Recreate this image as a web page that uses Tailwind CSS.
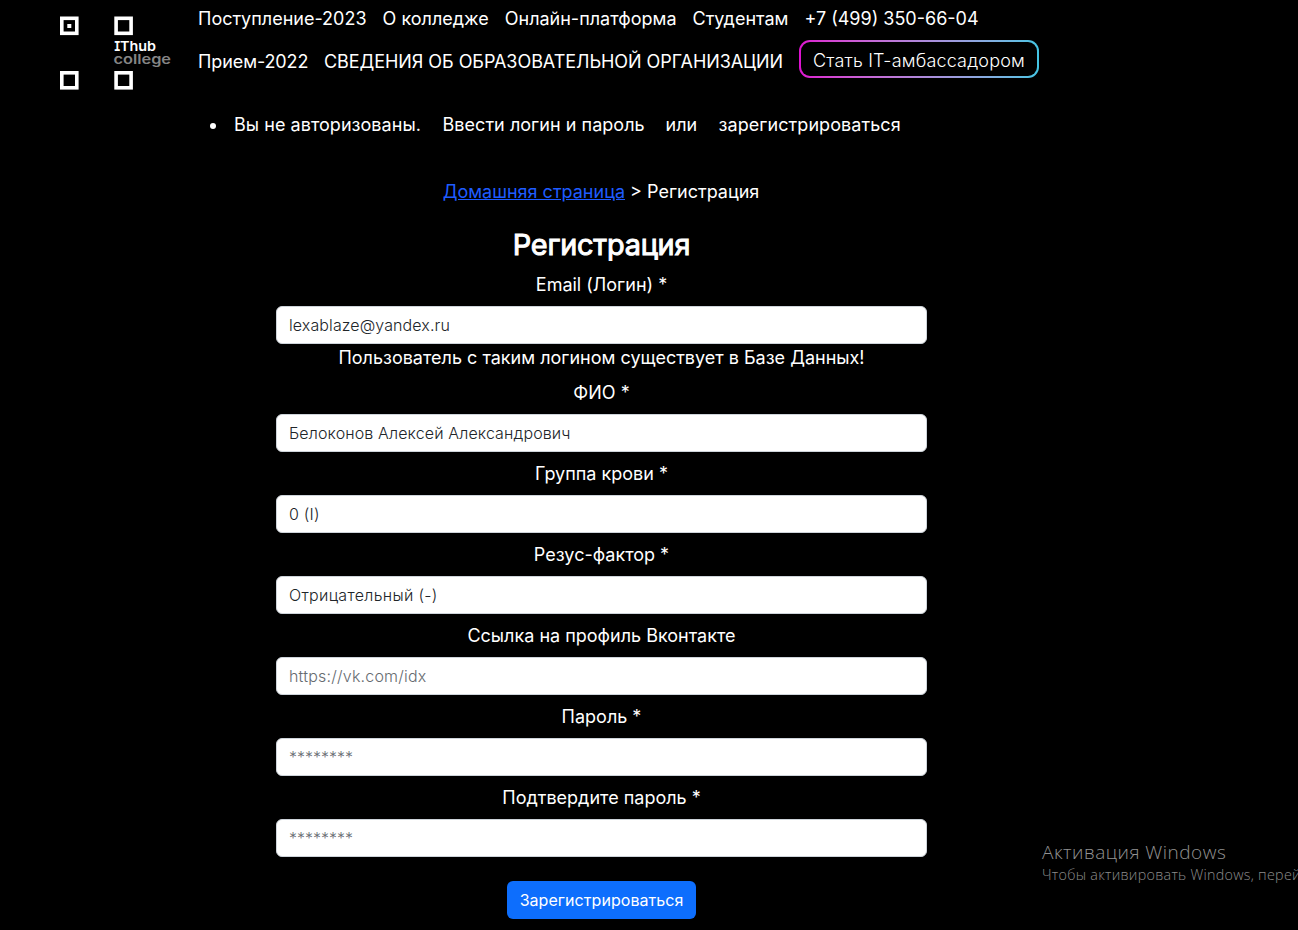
<!DOCTYPE html>
<html lang="ru">
<head>
<meta charset="utf-8">
<title>Регистрация</title>
<script src="https://cdn.jsdelivr.net/npm/@tailwindcss/browser@4"></script>
</head>
<body class="relative h-[930px] w-[1298px] overflow-hidden bg-black font-['Inter',sans-serif] text-[18px] leading-[27px] text-white">
<header class="flex h-[97px] pl-[60px]">
  <svg class="mt-4 h-[76px] w-[138px] shrink-0" viewBox="0 0 138 76">
    <g fill="none" stroke="#fff" stroke-width="3.6">
      <rect x="1.8" y="2.3" width="15" height="15"/><rect x="56.1" y="2.3" width="15" height="15"/>
      <rect x="1.8" y="56.8" width="15" height="15"/><rect x="56.1" y="56.8" width="15" height="15"/>
    </g>
    <rect x="7.3" y="8" width="4" height="4" fill="#fff"/>
    <text x="53.8" y="35.3" fill="#fff" font-family="DejaVu Sans Mono, monospace" font-weight="700" font-size="13.5" textLength="7" lengthAdjust="spacingAndGlyphs">I</text>
    <text x="60" y="35.3" fill="#fff" font-family="Inter, sans-serif" font-weight="600" font-size="13.4" textLength="36" lengthAdjust="spacingAndGlyphs">Thub</text>
    <text x="53.5" y="48" fill="#858585" font-family="Inter, sans-serif" font-weight="600" font-size="13.4" textLength="57.5" lengthAdjust="spacingAndGlyphs">college</text>
  </svg>
  <nav>
    <div class="flex gap-4 pt-[5px] whitespace-nowrap">
      <a>Поступление-2023</a><a>О колледже</a><a>Онлайн-платформа</a><a>Студентам</a><a>+7 (499) 350-66-04</a>
    </div>
    <div class="mt-2 flex gap-4 whitespace-nowrap">
      <a class="mt-2 w-[110px] tracking-[-0.1px]">Прием-2022</a><a class="mt-2 w-[459px] tracking-[-0.06px]">СВЕДЕНИЯ ОБ ОБРАЗОВАТЕЛЬНОЙ ОРГАНИЗАЦИИ</a>
      <a class="h-[38px] w-[240px] rounded-[11px] bg-linear-to-r from-[#dd0fd0] to-[#42c5e4] p-[2px]"><span class="flex h-full items-center justify-center rounded-[9px] bg-black pt-[2px] font-light tracking-[0.18px]">Стать IT-амбассадором</span></a>
    </div>
  </nav>
</header>
<ul class="mt-[14px] flex h-[27px] items-center whitespace-nowrap pl-[210px] tracking-[0.04px]">
  <li class="mt-[3px] mr-[18px] h-[6px] w-[6px] rounded-full bg-white"></li>
  <li class="mr-[21px] w-[187.5px]">Вы не авторизованы.</li><li class="mr-[21px] w-[202px]">Ввести логин и пароль</li><li class="mr-[21px] w-[32px]">или</li><li class="tracking-[0.07px]">зарегистрироваться</li>
</ul>
<main class="mt-[40px] ml-[276px] flex w-[651px] flex-col text-center">
  <p class="-ml-px"><a class="text-[#1f5cff] underline">Домашняя страница</a> &gt; Регистрация</p>
  <h1 class="mt-[22px] mb-[9px] text-[28.8px] leading-[35px] font-normal tracking-[-0.2px] [-webkit-text-stroke:1px_white]">Регистрация</h1>
  <label>Email (Логин) *</label>
  <input class="mt-2 h-[38px] rounded-md border border-[#ced4da] bg-white px-3 text-base font-light tracking-[0.1px] text-[#212529]" value="lexablaze@yandex.ru">
  <p>Пользователь с таким логином существует в Базе Данных!</p>
  <label class="mt-2">ФИО *</label>
  <input class="mt-2 h-[38px] rounded-md border border-[#ced4da] bg-white px-3 text-base font-light tracking-[0.13px] text-[#212529]" value="Белоконов Алексей Александрович">
  <label class="mt-2">Группа крови *</label>
  <input class="mt-2 h-[38px] rounded-md border border-[#ced4da] bg-white px-3 text-base font-light tracking-[0.2px] text-[#212529]" value="0 (I)">
  <label class="mt-2">Резус-фактор *</label>
  <input class="mt-2 h-[38px] rounded-md border border-[#ced4da] bg-white px-3 text-base font-light tracking-[0.33px] text-[#212529]" value="Отрицательный (-)">
  <label class="mt-2">Ссылка на профиль Вконтакте</label>
  <input class="mt-2 h-[38px] rounded-md border border-[#ced4da] bg-white px-3 text-base font-light tracking-[0.2px] placeholder:text-[#666b70]" placeholder="https://vk.com/idx">
  <label class="mt-2">Пароль *</label>
  <input class="mt-2 h-[38px] rounded-md border border-[#ced4da] bg-white px-3 text-base font-light placeholder:text-[#666b70]" placeholder="********">
  <label class="mt-2">Подтвердите пароль *</label>
  <input class="mt-2 h-[38px] rounded-md border border-[#ced4da] bg-white px-3 text-base font-light placeholder:text-[#666b70]" placeholder="********">
  <button class="mt-6 h-[38px] w-[189px] self-center rounded-md bg-[#0d6efd] text-base tracking-[0.05px]">Зарегистрироваться</button>
</main>
<aside class="absolute top-[839px] left-[1042px] font-['Open_Sans',sans-serif] whitespace-nowrap">
  <p class="text-[19px] leading-[26px] font-light tracking-[0.48px] text-[#929292]">Активация Windows</p>
  <p class="text-[14.3px] leading-[20px] font-light tracking-[0.28px] text-[#8c8c8c]">Чтобы активировать Windows, перей</p>
</aside>
</body>
</html>
